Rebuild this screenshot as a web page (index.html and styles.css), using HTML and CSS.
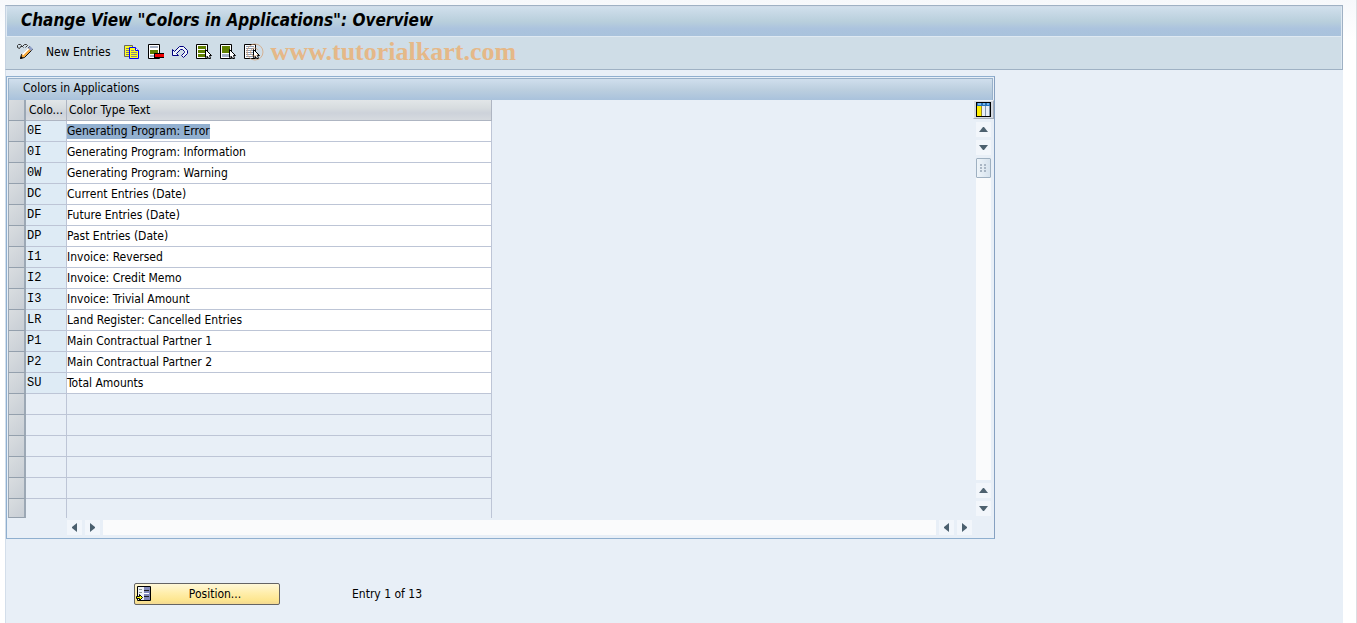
FILE: index.html
```
<!DOCTYPE html>
<html lang="en">
<head>
<meta charset="utf-8">
<title>Change View "Colors in Applications": Overview</title>
<link rel="stylesheet" href="styles.css">
</head>
<body>
<main class="window">
  <header class="head">
    <h1 class="title">Change View "Colors in Applications": Overview</h1>
    <div class="toolbar">
      <button class="tool" aria-label="Display or change"><svg width="18" height="18" viewBox="0 0 18 18"><path d="M1.500 4.500v-2l1-1h2l1 1-2 3M7.500 4.500l-1-1 2-2h2l1 1-2 2M5 3.500h2M1.500 4.500l2 1" fill="none" stroke="#333"/><path d="M4.500 15.500l1-4 8-8 3 3-8 8z" fill="#f7a93c" stroke="#111"/><path d="M6.500 11.500l6-6" stroke="#fff" stroke-width="2"/><path d="M12 5l2-2 3 3-2 2z" fill="#8fa0c8"/><path d="M4 16l1-3 2 2z"/></svg></button>
      <button class="tool tool-text">New Entries</button>
      <button class="tool" aria-label="Copy as"><svg width="16" height="16" viewBox="0 0 16 16"><path d="M.5 1.500h8v11h-8z" fill="#ffff20" stroke="#666"/><path d="M2 4.500h3M2 6.500h3M2 8.500h3M2 10.500h3" stroke="#777"/><path d="M5.500 3.500h6l3 3v8h-9z" fill="#ffff20" stroke="#00f"/><path d="M11.500 3.500v3h3" fill="#fff" stroke="#00f"/><path d="M7 6.500h3M7 8.500h6M7 10.500h6M7 12.500h6" stroke="#888"/></svg></button>
      <button class="tool" aria-label="Delete"><svg width="16" height="16" viewBox="0 0 16 16"><path d="M.5.5h11v14H.5z" fill="#fff" stroke="#000"/><path d="M2 2h8v2H2zM2 11h5v2H2z" fill="#a4b0c4"/><path d="M2 6h8v4H2z" fill="#608000"/><path d="M6 9h10v5H6z" fill="#000"/><path d="M7 10h9v3H7z" fill="#f00000"/></svg></button>
      <button class="tool" aria-label="Undo"><svg width="16" height="16" viewBox="0 0 16 16"><path d="M.5 5.500v6h6l-2-2 4-4h2l2 2v1l-3 3 2 2 4-4v-3l-4-4h-4l-5 5z" fill="#eef3f8" stroke="#000080"/></svg></button>
      <button class="tool" aria-label="Select all"><svg width="16" height="16" viewBox="0 0 16 16"><path d="M.5.5h11v14H.5z" fill="#fff" stroke="#000"/><path d="M2 2h8v3H2zM2 6h8v3H2zM2 10h8v3H2z" fill="#608000"/><path d="M9.500 5.500v8l2-1 1 2h2l-1-3h2z" fill="#fff" stroke="#000"/></svg></button>
      <button class="tool" aria-label="Select block"><svg width="16" height="16" viewBox="0 0 16 16"><path d="M.5.5h11v14H.5z" fill="#fff" stroke="#000"/><path d="M2 2h8v7H2z" fill="#608000"/><path d="M2 10h8v3H2z" fill="#a4b0c4"/><path d="M9.500 5.500v8l2-1 1 2h2l-1-3h2z" fill="#fff" stroke="#000"/></svg></button>
      <button class="tool" aria-label="Deselect all"><svg width="16" height="16" viewBox="0 0 16 16"><path d="M.5.5h11v14H.5z" fill="#fff" stroke="#000"/><path d="M2 2.500h8M2 4.500h8M2 6.500h8M2 8.500h8M2 10.500h8M2 12.500h8" stroke="#8c9bb0"/><path d="M9.500 5.500v8l2-1 1 2h2l-1-3h2z" fill="#fff" stroke="#000"/></svg><svg class="ring" width="18" height="18" viewBox="0 0 18 18"><circle cx="9" cy="9" r="8"/><path d="M12 7a4 4 0 1 0 0 4"/></svg></button>
      <span class="mark">www.tutorialkart.com</span>
    </div>
  </header>

  <section class="panel">
    <h2 class="panel-title">Colors in Applications</h2>
    <div class="panel-body">
      <table class="grid">
        <thead><tr><th class="sel"></th><th class="code">Colo...</th><th>Color Type Text</th></tr></thead>
        <tbody>
          <tr><td class="sel"></td><td class="code">0E</td><td><mark>Generating Program: Error</mark></td></tr>
          <tr><td class="sel"></td><td class="code">0I</td><td>Generating Program: Information</td></tr>
          <tr><td class="sel"></td><td class="code">0W</td><td>Generating Program: Warning</td></tr>
          <tr><td class="sel"></td><td class="code">DC</td><td>Current Entries (Date)</td></tr>
          <tr><td class="sel"></td><td class="code">DF</td><td>Future Entries (Date)</td></tr>
          <tr><td class="sel"></td><td class="code">DP</td><td>Past Entries (Date)</td></tr>
          <tr><td class="sel"></td><td class="code">I1</td><td>Invoice: Reversed</td></tr>
          <tr><td class="sel"></td><td class="code">I2</td><td>Invoice: Credit Memo</td></tr>
          <tr><td class="sel"></td><td class="code">I3</td><td>Invoice: Trivial Amount</td></tr>
          <tr><td class="sel"></td><td class="code">LR</td><td>Land Register: Cancelled Entries</td></tr>
          <tr><td class="sel"></td><td class="code">P1</td><td>Main Contractual Partner 1</td></tr>
          <tr><td class="sel"></td><td class="code">P2</td><td>Main Contractual Partner 2</td></tr>
          <tr><td class="sel"></td><td class="code">SU</td><td>Total Amounts</td></tr>
        </tbody>
        <tbody class="blank">
          <tr><td class="sel"></td><td class="code"></td><td></td></tr>
          <tr><td class="sel"></td><td class="code"></td><td></td></tr>
          <tr><td class="sel"></td><td class="code"></td><td></td></tr>
          <tr><td class="sel"></td><td class="code"></td><td></td></tr>
          <tr><td class="sel"></td><td class="code"></td><td></td></tr>
          <tr class="last"><td class="sel"></td><td class="code"></td><td></td></tr>
        </tbody>
      </table>
      <div class="side">
        <button class="config" aria-label="Table settings"><svg width="15" height="15" viewBox="0 0 15 15"><path d="M0 0h15v15H0z"/><path d="M1 1h13v3H1z" fill="#2672b8"/><path d="M2 1h3v2H2zM7 1h2v2H7zM11 1h2v2h-2z" fill="#78b4e8"/><path d="M1 4h4v10H1z" fill="#ffee00"/><path d="M6 4h3v10H6zM10 4h4v10h-4z" fill="#e8eef6"/><path d="M5 4h1v10H5z" fill="#98862c"/><path d="M9 4h1v10H9zM13 4h1v10h-1z" fill="#8294a8"/></svg></button>
        <button class="arrow" aria-label="First row"><svg width="9" height="5" viewBox="0 0 9 5"><path d="M0 5l4-5h1l4 5z"/></svg></button>
        <button class="arrow" aria-label="Row up"><svg width="9" height="5" viewBox="0 0 9 5"><path d="M0 0l4 5h1l4-5z"/></svg></button>
        <div class="track"><div class="thumb"><svg width="7" height="8" viewBox="0 0 7 8"><path d="M0 0h2v2H0zM4 0h2v2H4zM0 3h2v2H0zM4 3h2v2H4zM0 6h2v2H0zM4 6h2v2H4z"/></svg></div></div>
        <button class="arrow" aria-label="Row down"><svg width="9" height="5" viewBox="0 0 9 5"><path d="M0 5l4-5h1l4 5z"/></svg></button>
        <button class="arrow" aria-label="Last row"><svg width="9" height="5" viewBox="0 0 9 5"><path d="M0 0l4 5h1l4-5z"/></svg></button>
      </div>
    </div>
    <div class="hscroll">
      <button class="arrow" aria-label="First column"><svg width="5" height="9" viewBox="0 0 5 9"><path d="M5 0L0 4v1l5 4z"/></svg></button>
      <button class="arrow" aria-label="Column left"><svg width="5" height="9" viewBox="0 0 5 9"><path d="M0 0l5 4v1L0 9z"/></svg></button>
      <div class="htrack"></div>
      <button class="arrow" aria-label="Column right"><svg width="5" height="9" viewBox="0 0 5 9"><path d="M5 0L0 4v1l5 4z"/></svg></button>
      <button class="arrow" aria-label="Last column"><svg width="5" height="9" viewBox="0 0 5 9"><path d="M0 0l5 4v1L0 9z"/></svg></button>
    </div>
  </section>

  <footer class="foot">
    <button class="position"><svg width="16" height="16" viewBox="0 0 16 16"><path d="M1.500.5h13v14h-13z" fill="#eef1f6" stroke="#000"/><path d="M8 1h6v13H8z" fill="#8088b8"/><path d="M8 4.500h5M8 10.500h5" stroke="#222"/><path d="M8 7.500h5" stroke="#fff"/><path d="M3 3.500h3M3 6.500h3" stroke="#8a9a96"/><path d="M.5 10.500h3v-2l3 3-3 3v-2h-3z" fill="#ff0" stroke="#000"/></svg><span>Position...</span></button>
    <span>Entry 1 of 13</span>
  </footer>
</main>
</body>
</html>
```
FILE: styles.css
```
* { box-sizing: border-box; }
body {
  margin: 0;
  padding: 5px 13px 0 5px;
  min-height: 100vh;
  display: flex;
  background: linear-gradient(#f6f8fb, #fff 40px);
  border-right: 1px solid #dcdee2;
  font: 12px/20px "DejaVu Sans Condensed", "DejaVu Sans", sans-serif;
  color: #000;
}
button { font: inherit; color: inherit; border: 0; background: none; padding: 0; }
svg { display: block; }
.window {
  flex: 1;
  min-width: 0;
  background: #e8eff7;
  border-left: 1px solid #d3deea;
}
.head { border: 1px solid #9fb1c4; border-left-color: #c5d3e2; margin-left: -1px; }
.title {
  margin: 0;
  height: 31px;
  padding: 0 14px;
  border: 1px solid #dfe9f2;
  border-top-color: #d0dbe8;
  background: linear-gradient(#d0dfec, #b9cfdc 50%, #abc3de 75%, #a9c2dc);
  font-size: 17px;
  line-height: 26px;
  font-weight: bold;
  font-style: italic;
}
.toolbar {
  display: flex;
  align-items: center;
  height: 32px;
  padding: 0 10px 2px;
  gap: 8px;
  background: #cfdde7;
  border-right: 1px solid #dfe9f2;
}
.tool { position: relative; }
.tool-text { padding: 0 5px 0 4px; }
.ring { position: absolute; left: 2px; top: -1px; fill: none; stroke: #d8a070; opacity: .7; }
.mark { margin-left: 3px; font: bold 26px/30px "Liberation Serif", serif; color: #e5b888; }
.panel {
  width: 74%;
  max-width: 990px;
  margin-top: 6px;
  border: 1px solid #8fafcf;
  border-right-color: #86a0c0;
}
.panel-title {
  margin: 1px 1px 0;
  height: 22px;
  padding: 0 14px;
  border: 1px solid #98b1ca;
  border-bottom: 0;
  background: linear-gradient(#d0dfed, #bccfdf 50%, #a9c2dc);
  font-size: 12px;
  line-height: 18px;
  font-weight: normal;
}
.panel-body { display: flex; justify-content: space-between; padding: 0 1px; }
.grid {
  width: 484px;
  table-layout: fixed;
  border-collapse: separate;
  border-spacing: 0;
}
.grid tr { height: 21px; }
.grid tr.last { height: 19px; }
.grid th, .grid td {
  padding: 1px 0 0;
  text-align: left;
  font-weight: normal;
  line-height: 19px;
  border-right: 1px solid #bdc5d6;
  border-bottom: 1px solid #bdc5d6;
  background: #fff;
  white-space: nowrap;
}
.grid th { padding-left: 2px; border-color: #aeb5c2; background: linear-gradient(#e2e6e8, #d7dcdf 40%, #cdd2da 65%, #d6dadf); }
.grid .sel {
  width: 18px;
  border-right: 2px solid #9ca8b5;
  border-bottom-color: #94a0ad;
  border-left: 1px solid #9ca8b5;
  background: linear-gradient(135deg, #d9dde0, #c8ced5);
}
.grid .code { width: 41px; }
.grid th.code { padding-left: 3px; }
.grid td.code { background: #deebf5; padding-left: 1px; font: 12px/19px "Liberation Mono", monospace; }
.grid .blank td:not(.sel) { background: #e8eff7; }
.grid .last td:not(.sel) { border-bottom: 0; }
.grid mark { display: inline-block; height: 15px; line-height: 15px; background: #92b0d0; color: inherit; }
.side { width: 19px; display: flex; flex-direction: column; align-items: center; gap: 3px; padding-bottom: 2px; }
.config { padding: 1px 2px; border: 1px solid #eef1f5; border-right-color: #a4acb8; border-bottom-color: #a4acb8; background: #d5dae2; }
.arrow { width: 15px; height: 15px; display: grid; place-items: center; background: #f2f6fb; fill: #4d616f; }
.track { flex: 1; width: 15px; background: #fafbfc; }
.thumb { height: 20px; display: grid; place-items: center; border: 1px solid #9eb0c1; border-radius: 1px; background: linear-gradient(90deg, #eef4f9, #d6e2ed); fill: #aab7c5; }
.hscroll { display: flex; gap: 3px; padding: 2px 22px 3px 60px; }
.htrack { flex: 1; background: #fafbfc; }
.foot { display: flex; align-items: center; gap: 72px; padding: 44px 0 0 128px; }
.position {
  display: flex;
  align-items: center;
  width: 146px;
  height: 22px;
  padding: 0 1px;
  border: 1px solid #646464;
  border-radius: 2px;
  background: linear-gradient(#fff8d8, #ffeeab 45%, #fde690 80%, #f3d993);
}
.position span { flex: 1; text-align: center; }
```
